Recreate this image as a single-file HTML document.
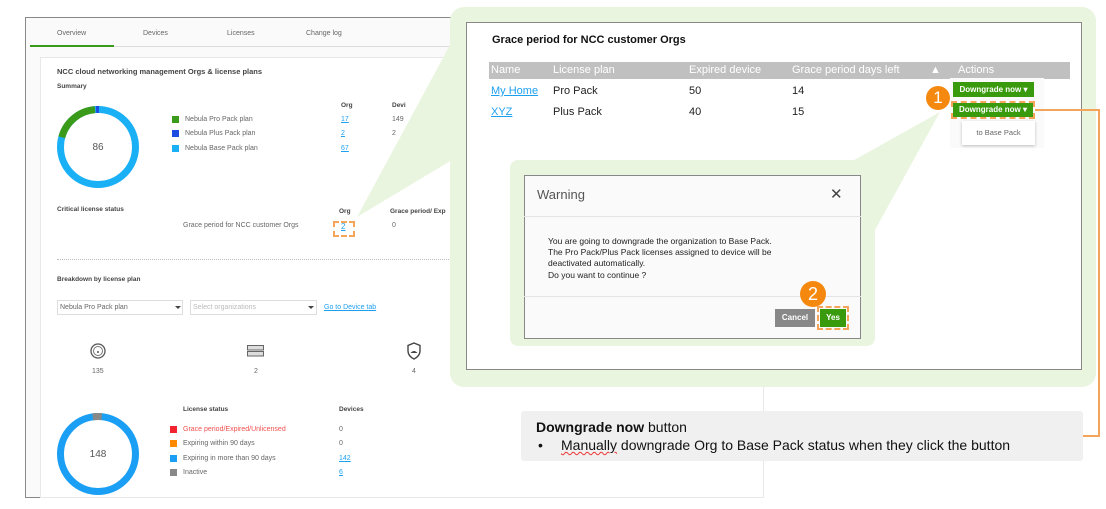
<!DOCTYPE html>
<html><head><meta charset="utf-8"><style>
*{margin:0;padding:0;box-sizing:border-box}
body{width:1106px;height:509px;background:#fff;position:relative;overflow:hidden;font-family:"Liberation Sans",sans-serif;color:#555}
.a{position:absolute;white-space:nowrap}
.s{font-size:7px;color:#666}
.b{font-weight:bold;color:#444}
.lk{color:#1ea0f0;text-decoration:underline}
.sq{position:absolute;width:7px;height:7px}
</style></head><body>
<!-- left panel -->
<div class="a" style="left:25px;top:17px;width:739px;height:481px;border:1px solid #888;background:#fafafa"></div>
<div class="a" style="left:30px;top:46px;width:428px;height:1px;background:#ddd"></div>
<div class="a" style="left:30px;top:45px;width:84px;height:2px;background:#3a9a1a"></div>
<div class="a s" style="left:57px;top:30px">Overview</div>
<div class="a s" style="left:143px;top:30px">Devices</div>
<div class="a s" style="left:227px;top:30px">Licenses</div>
<div class="a s" style="left:306px;top:30px">Change log</div>
<div class="a" style="left:40px;top:57px;width:724px;height:441px;border:1px solid #e8e8e8;background:#fff"></div>
<div class="a b" style="left:57px;top:67px;font-size:7.5px">NCC cloud networking management Orgs &amp; license plans</div>
<div class="a b" style="left:57px;top:83px;font-size:6.5px">Summary</div>
<svg class="a" style="left:56px;top:105px" width="84" height="84" viewBox="0 0 84 84">
<circle cx="42" cy="42" r="37.5" fill="none" stroke="#1ab0f5" stroke-width="7"/>
<circle cx="42" cy="42" r="37.5" fill="none" stroke="#3a9a1a" stroke-width="7" stroke-dasharray="46 300" transform="rotate(-165 42 42)"/>
<circle cx="42" cy="42" r="37.5" fill="none" stroke="#1c4de0" stroke-width="7" stroke-dasharray="3 300" transform="rotate(-93 42 42)"/>
<text x="42" y="45" font-size="10" text-anchor="middle" fill="#555" font-family="Liberation Sans">86</text></svg>
<div class="sq" style="left:172px;top:116px;background:#3a9a1a"></div>
<div class="sq" style="left:172px;top:130px;background:#1c4de0"></div>
<div class="sq" style="left:172px;top:145px;background:#1ab0f5"></div>
<div class="a s" style="left:185px;top:116px">Nebula Pro Pack plan</div>
<div class="a s" style="left:185px;top:130px">Nebula Plus Pack plan</div>
<div class="a s" style="left:185px;top:145px">Nebula Base Pack plan</div>
<div class="a b" style="left:341px;top:102px;font-size:6.5px">Org</div>
<div class="a b" style="left:392px;top:102px;font-size:6.5px">Devi</div>
<div class="a s lk" style="left:341px;top:116px">17</div>
<div class="a s lk" style="left:341px;top:130px">2</div>
<div class="a s lk" style="left:341px;top:145px">67</div>
<div class="a s" style="left:392px;top:116px">149</div>
<div class="a s" style="left:392px;top:130px">2</div>
<div class="a b" style="left:57px;top:206px;font-size:6.5px">Critical license status</div>
<div class="a b" style="left:339px;top:208px;font-size:6.5px">Org</div>
<div class="a b" style="left:390px;top:208px;font-size:6.5px">Grace period/ Exp</div>
<div class="a s" style="left:183px;top:222px">Grace period for NCC customer Orgs</div>
<div class="a s lk" style="left:341px;top:222px;font-size:8px">2</div>
<div class="a" style="left:333px;top:221px;width:22px;height:16px;border:2px dashed #f5a55a"></div>
<div class="a s" style="left:392px;top:222px">0</div>
<div class="a" style="left:57px;top:259px;width:400px;border-top:1px dotted #bbb"></div>
<div class="a b" style="left:57px;top:276px;font-size:6.5px">Breakdown by license plan</div>
<div class="a" style="left:57px;top:300px;width:126px;height:15px;border:1px solid #ddd;background:#fff"></div>
<div class="a s" style="left:60px;top:304px">Nebula Pro Pack plan</div>
<div class="a" style="left:175px;top:306px;border:3px solid transparent;border-top:3px solid #444"></div>
<div class="a" style="left:190px;top:300px;width:127px;height:15px;border:1px solid #ddd;background:#fff"></div>
<div class="a s" style="left:193px;top:304px;color:#bbb">Select organizations</div>
<div class="a" style="left:308px;top:306px;border:3px solid transparent;border-top:3px solid #444"></div>
<div class="a s lk" style="left:324px;top:304px">Go to Device tab</div>
<svg class="a" style="left:90px;top:343px" width="16" height="16"><circle cx="8" cy="8" r="7" fill="none" stroke="#555" stroke-width="1.3"/><circle cx="8" cy="8" r="4.5" fill="none" stroke="#777" stroke-width="1"/><circle cx="8" cy="9" r="1" fill="#555"/></svg>
<svg class="a" style="left:247px;top:345px" width="18" height="12"><rect x="0.5" y="0.5" width="16" height="4.5" fill="#ddd" stroke="#666"/><rect x="0.5" y="6.5" width="16" height="4.5" fill="#ddd" stroke="#666"/></svg>
<svg class="a" style="left:406px;top:342px" width="16" height="18"><path d="M8 1L14 3.5V9C14 13 11 15.5 8 17C5 15.5 2 13 2 9V3.5Z" fill="none" stroke="#444" stroke-width="1.4"/><path d="M4.5 11Q8 7 11.5 11Z" fill="#444"/></svg>
<div class="a s" style="left:92px;top:368px">135</div>
<div class="a s" style="left:254px;top:368px">2</div>
<div class="a s" style="left:412px;top:368px">4</div>
<svg class="a" style="left:56px;top:412px" width="84" height="84" viewBox="0 0 84 84">
<circle cx="42" cy="42" r="37.5" fill="none" stroke="#1a9ff5" stroke-width="7"/>
<circle cx="42" cy="42" r="37.5" fill="none" stroke="#888" stroke-width="7" stroke-dasharray="9 300" transform="rotate(-98 42 42)"/>
<text x="42" y="45" font-size="10" text-anchor="middle" fill="#555" font-family="Liberation Sans">148</text></svg>
<div class="a b" style="left:183px;top:406px;font-size:6.5px">License status</div>
<div class="a b" style="left:339px;top:406px;font-size:6.5px">Devices</div>
<div class="sq" style="left:170px;top:426px;background:#f0232f"></div>
<div class="sq" style="left:170px;top:440px;background:#ff8a00"></div>
<div class="sq" style="left:170px;top:455px;background:#1a9ff5"></div>
<div class="sq" style="left:170px;top:469px;background:#888"></div>
<div class="a s" style="left:183px;top:426px;color:#f05050">Grace period/Expired/Unlicensed</div>
<div class="a s" style="left:183px;top:440px">Expiring within 90 days</div>
<div class="a s" style="left:183px;top:455px">Expiring in more than 90 days</div>
<div class="a s" style="left:183px;top:469px">Inactive</div>
<div class="a s" style="left:339px;top:426px">0</div>
<div class="a s" style="left:339px;top:440px">0</div>
<div class="a s lk" style="left:339px;top:455px">142</div>
<div class="a s lk" style="left:339px;top:469px">6</div>

<!-- green callout -->
<svg class="a" style="left:0;top:0" width="1106" height="509">
<polygon points="470,8 357,217 452,160" fill="#e9f5df"/>
</svg>
<div class="a" style="left:450px;top:7px;width:646px;height:380px;background:#e9f5df;border-radius:14px"></div>
<div class="a" style="left:466px;top:22px;width:616px;height:348px;background:#fff;border:1px solid #888"></div>
<div class="a" style="left:492px;top:34px;font-size:11px;font-weight:bold;color:#111">Grace period for NCC customer Orgs</div>
<div class="a" style="left:489px;top:62px;width:581px;height:17px;background:#c0c0c0"></div>
<div class="a" style="left:491px;top:64px;font-size:11px;color:#fff">Name</div>
<div class="a" style="left:553px;top:64px;font-size:11px;color:#fff">License plan</div>
<div class="a" style="left:689px;top:64px;font-size:11px;color:#fff">Expired device</div>
<div class="a" style="left:792px;top:64px;font-size:11px;color:#fff">Grace period days left</div>
<div class="a" style="left:930px;top:64px;font-size:11px;color:#fff">▲</div>
<div class="a" style="left:958px;top:64px;font-size:11px;color:#fff">Actions</div>
<div class="a lk" style="left:491px;top:85px;font-size:11px">My Home</div>
<div class="a" style="left:553px;top:85px;font-size:11px;color:#222">Pro Pack</div>
<div class="a" style="left:689px;top:85px;font-size:11px;color:#222">50</div>
<div class="a" style="left:792px;top:85px;font-size:11px;color:#222">14</div>
<div class="a lk" style="left:491px;top:106px;font-size:11px">XYZ</div>
<div class="a" style="left:553px;top:106px;font-size:11px;color:#222">Plus Pack</div>
<div class="a" style="left:689px;top:106px;font-size:11px;color:#222">40</div>
<div class="a" style="left:792px;top:106px;font-size:11px;color:#222">15</div>
<div class="a" style="left:950px;top:78px;width:94px;height:70px;background:#fafafa"></div>
<div class="a" style="left:953px;top:82px;width:81px;height:15px;background:#3a9a0e;color:#fff;font-size:8px;font-weight:bold;line-height:15px;text-align:center">Downgrade now ▾</div>
<div class="a" style="left:953px;top:103px;width:80px;height:14px;background:#3a9a0e;color:#fff;font-size:8px;font-weight:bold;line-height:14px;text-align:center">Downgrade now ▾</div>
<div class="a" style="left:951px;top:101px;width:84px;height:18px;border:2px dashed #f5a55a"></div>
<div class="a" style="left:962px;top:121px;width:73px;height:24px;background:#fff;box-shadow:0 1px 3px rgba(0,0,0,.25);font-size:7.5px;color:#666;line-height:24px;text-align:center">to Base Pack</div>
<div class="a" style="left:926px;top:86px;width:24px;height:24px;border-radius:50%;background:#f5890f;color:#fff;font-size:17px;line-height:24px;text-align:center">1</div>
<!-- orange connector -->
<div class="a" style="left:1035px;top:109px;width:64px;height:2px;background:#f5a55a"></div>
<div class="a" style="left:1098px;top:109px;width:2px;height:328px;background:#f5a55a"></div>
<div class="a" style="left:1082px;top:435px;width:18px;height:2px;background:#f5a55a"></div>

<!-- warning callout -->
<svg class="a" style="left:0;top:0" width="1106" height="509"><polygon points="860,180 940,112 880,160" fill="#e9f5df"/><polygon points="840,168 940,112 875,230" fill="#e9f5df"/></svg>
<div class="a" style="left:510px;top:160px;width:365px;height:186px;background:#e9f5df;border-radius:8px"></div>
<div class="a" style="left:524px;top:175px;width:337px;height:164px;background:#fafafa;border:1px solid #888"></div>
<div class="a" style="left:524px;top:216px;width:337px;height:1px;background:#e4e4e4"></div>
<div class="a" style="left:524px;top:296px;width:337px;height:1px;background:#e4e4e4"></div>
<div class="a" style="left:537px;top:187px;font-size:13px;color:#555">Warning</div>
<div class="a" style="left:830px;top:185px;font-size:15px;color:#444">✕</div>
<div class="a" style="left:548px;top:236px;font-size:8.5px;line-height:11.2px;color:#222">You are going to downgrade the organization to Base Pack.<br>The Pro Pack/Plus Pack licenses assigned to device will be<br>deactivated automatically.<br>Do you want to continue ?</div>
<div class="a" style="left:775px;top:309px;width:40px;height:18px;background:#888;color:#fff;font-size:8px;font-weight:bold;line-height:18px;text-align:center">Cancel</div>
<div class="a" style="left:820px;top:309px;width:26px;height:18px;background:#3a9a0e;color:#fff;font-size:8px;font-weight:bold;line-height:18px;text-align:center">Yes</div>
<div class="a" style="left:817px;top:306px;width:32px;height:24px;border:2px dashed #f5a55a"></div>
<div class="a" style="left:800px;top:281px;width:26px;height:26px;border-radius:50%;background:#f5890f;color:#fff;font-size:18px;line-height:26px;text-align:center">2</div>

<!-- note -->
<div class="a" style="left:521px;top:411px;width:562px;height:50px;background:#f0f0f0;border-radius:3px"></div>
<div class="a" style="left:536px;top:419px;font-size:14px;color:#111"><b>Downgrade now</b> button</div>
<div class="a" style="left:538px;top:437px;font-size:14px;color:#111">•</div>
<div class="a" style="left:561px;top:437px;font-size:14px;color:#111"><span style="text-decoration:underline wavy #e33;text-decoration-thickness:1px">Manually</span> downgrade Org to Base Pack status when they click the button</div>
</body></html>
